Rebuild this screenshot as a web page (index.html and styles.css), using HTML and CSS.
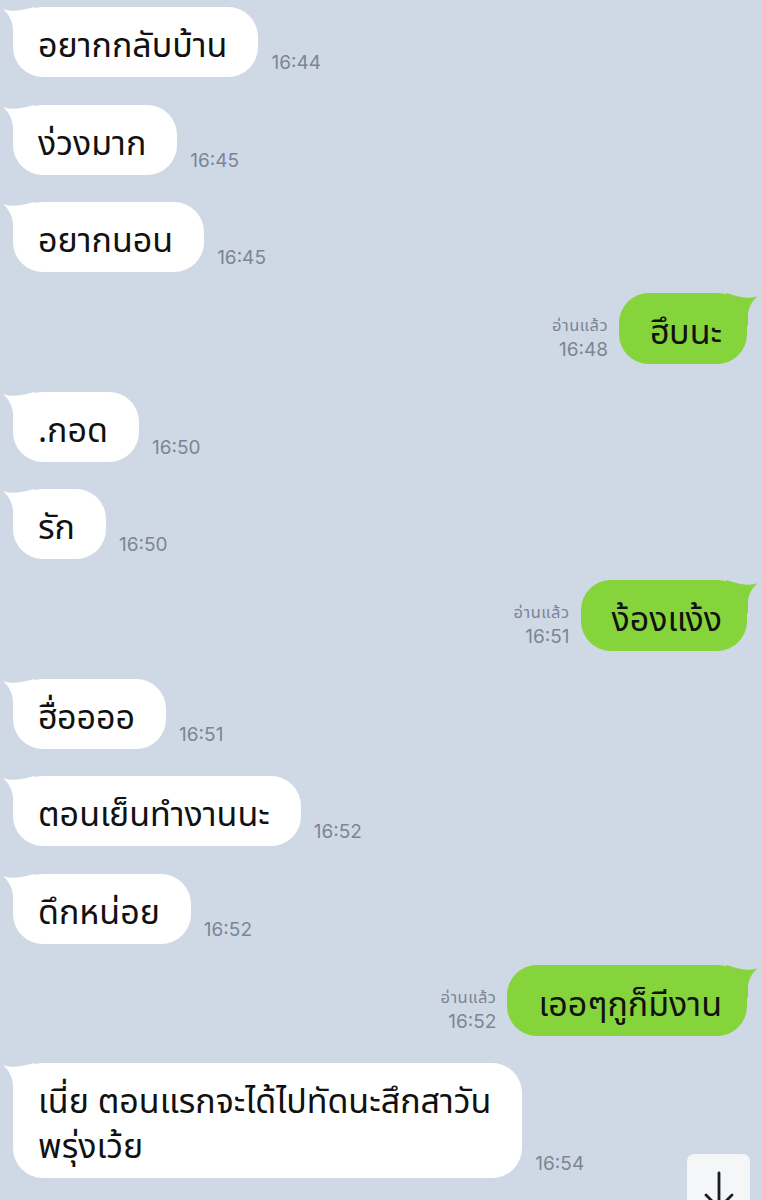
FILE: index.html
```html
<!DOCTYPE html>
<html lang="th">
<head>
<meta charset="utf-8">
<title>Chat</title>
<link rel="stylesheet" href="styles.css">
</head>
<body>
<div class="chat">
  <div class="row in">
    <div class="bubble white"><svg class="tail" width="32" height="33" viewBox="0 0 32 33"><path d="M0,2 C7,5 17,4 32,0 L32,33 L10,33 L10,21 C9,13 5,6 0,2 Z"/></svg>อยากกลับบ้าน</div>
    <div class="time">16:44</div>
  </div>
  <div class="row in">
    <div class="bubble white"><svg class="tail" width="32" height="33" viewBox="0 0 32 33"><path d="M0,2 C7,5 17,4 32,0 L32,33 L10,33 L10,21 C9,13 5,6 0,2 Z"/></svg>ง่วงมาก</div>
    <div class="time">16:45</div>
  </div>
  <div class="row in">
    <div class="bubble white"><svg class="tail" width="32" height="33" viewBox="0 0 32 33"><path d="M0,2 C7,5 17,4 32,0 L32,33 L10,33 L10,21 C9,13 5,6 0,2 Z"/></svg>อยากนอน</div>
    <div class="time">16:45</div>
  </div>
  <div class="row out">
    <div class="meta"><div class="read">อ่านแล้ว</div><div class="num">16:48</div></div>
    <div class="bubble green"><svg class="tail" width="32" height="33" viewBox="0 0 32 33"><path d="M32,3 C25,6 15,5 0,0 L0,33 L22,33 L22,21 C23,13 27,7 32,3 Z"/></svg>ฮึบนะ</div>
  </div>
  <div class="row in">
    <div class="bubble white"><svg class="tail" width="32" height="33" viewBox="0 0 32 33"><path d="M0,2 C7,5 17,4 32,0 L32,33 L10,33 L10,21 C9,13 5,6 0,2 Z"/></svg>.กอด</div>
    <div class="time">16:50</div>
  </div>
  <div class="row in">
    <div class="bubble white"><svg class="tail" width="32" height="33" viewBox="0 0 32 33"><path d="M0,2 C7,5 17,4 32,0 L32,33 L10,33 L10,21 C9,13 5,6 0,2 Z"/></svg>รัก</div>
    <div class="time">16:50</div>
  </div>
  <div class="row out">
    <div class="meta"><div class="read">อ่านแล้ว</div><div class="num">16:51</div></div>
    <div class="bubble green"><svg class="tail" width="32" height="33" viewBox="0 0 32 33"><path d="M32,3 C25,6 15,5 0,0 L0,33 L22,33 L22,21 C23,13 27,7 32,3 Z"/></svg>ง้องแง้ง</div>
  </div>
  <div class="row in">
    <div class="bubble white"><svg class="tail" width="32" height="33" viewBox="0 0 32 33"><path d="M0,2 C7,5 17,4 32,0 L32,33 L10,33 L10,21 C9,13 5,6 0,2 Z"/></svg>ฮื่ออออ</div>
    <div class="time">16:51</div>
  </div>
  <div class="row in">
    <div class="bubble white"><svg class="tail" width="32" height="33" viewBox="0 0 32 33"><path d="M0,2 C7,5 17,4 32,0 L32,33 L10,33 L10,21 C9,13 5,6 0,2 Z"/></svg>ตอนเย็นทำงานนะ</div>
    <div class="time">16:52</div>
  </div>
  <div class="row in">
    <div class="bubble white"><svg class="tail" width="32" height="33" viewBox="0 0 32 33"><path d="M0,2 C7,5 17,4 32,0 L32,33 L10,33 L10,21 C9,13 5,6 0,2 Z"/></svg>ดึกหน่อย</div>
    <div class="time">16:52</div>
  </div>
  <div class="row out">
    <div class="meta"><div class="read">อ่านแล้ว</div><div class="num">16:52</div></div>
    <div class="bubble green"><svg class="tail" width="32" height="33" viewBox="0 0 32 33"><path d="M32,3 C25,6 15,5 0,0 L0,33 L22,33 L22,21 C23,13 27,7 32,3 Z"/></svg>เออๆกูก็มีงาน</div>
  </div>
  <div class="row in">
    <div class="bubble white"><svg class="tail" width="32" height="33" viewBox="0 0 32 33"><path d="M0,2 C7,5 17,4 32,0 L32,33 L10,33 L10,21 C9,13 5,6 0,2 Z"/></svg>เนี่ย ตอนแรกจะได้ไปทัดนะสึกสาวัน<br>พรุ่งเว้ย</div>
    <div class="time">16:54</div>
  </div>
</div>
<button class="scroll-down" aria-label="เลื่อนลง">
  <svg width="32" height="40" viewBox="0 0 32 40"><path d="M16,3 V38 M3,25 L16,38 L29,25" fill="none" stroke="#1c1c1e" stroke-width="2.8" stroke-linecap="round" stroke-linejoin="round"/></svg>
</button>
</body>
</html>
```
FILE: styles.css
```css
html, body {
  margin: 0;
  padding: 0;
}
body {
  background: #cfd9e5;
  height: 1200px;
  overflow: hidden;
  position: relative;
  font-family: "Noto Sans Thai", "Noto Sans", "DejaVu Sans", sans-serif;
}
.chat {
  display: flex;
  flex-direction: column;
  gap: 27.5px;
  padding: 7px 14px 0 13px;
}
.row {
  display: flex;
  align-items: flex-end;
}
.row.in {
  justify-content: flex-start;
  gap: 13px;
}
.row.out {
  justify-content: flex-end;
  gap: 11px;
  margin-top: -6.5px;
}
.bubble {
  position: relative;
  font-size: 34px;
  line-height: 45px;
  padding: 17px 31px 8px 25px;
  border-radius: 30px;
  color: #111;
  white-space: nowrap;
}
.bubble.white {
  background: #ffffff;
}
.bubble.green {
  background: #86d43b;
  padding: 18px 25px 8px 31px;
}
.tail {
  position: absolute;
  top: 0;
}
.white .tail {
  left: -10px;
  fill: #ffffff;
}
.green .tail {
  right: -11px;
  fill: #86d43b;
}
.time {
  font-family: "Inter", "Noto Sans", sans-serif;
  font-size: 19px;
  line-height: 22px;
  color: #7b8595;
  margin-bottom: 3px;
}
.meta {
  color: #7b8595;
  text-align: right;
  margin-bottom: 3px;
}
.meta .read {
  font-size: 16.5px;
  letter-spacing: 0.5px;
  line-height: 22px;
  margin-bottom: 2px;
}
.meta .num {
  font-family: "Inter", "Noto Sans", sans-serif;
  font-size: 19px;
  line-height: 22px;
}
.scroll-down {
  position: absolute;
  left: 687px;
  top: 1154px;
  width: 63px;
  height: 60px;
  border: none;
  border-radius: 7px;
  background: #f5f6f8;
  padding: 16px 0 0;
  display: flex;
  justify-content: center;
  align-items: flex-start;
}
.scroll-down svg {
  display: block;
}
```
